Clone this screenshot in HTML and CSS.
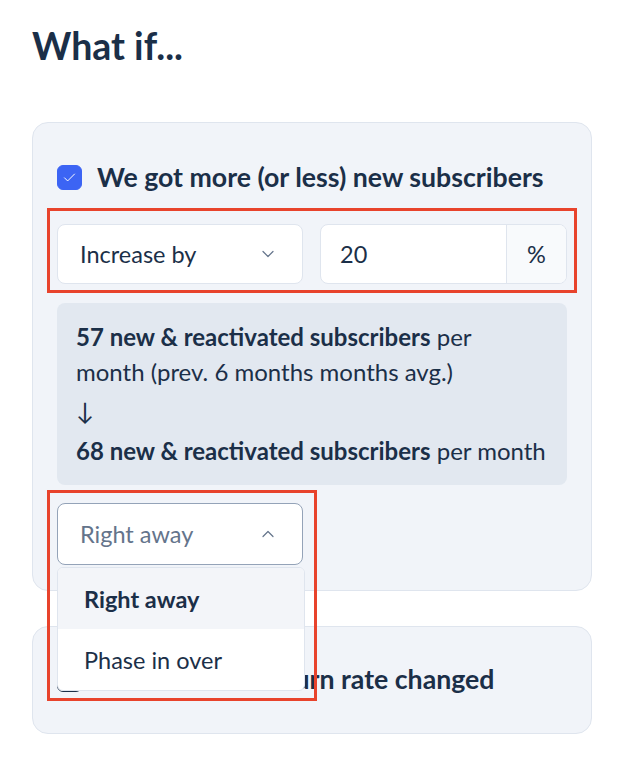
FILE: index.html
```html
<!DOCTYPE html>
<html lang="en">

<head>
    <meta charset="UTF-8">
    <meta name="viewport" content="width=device-width, initial-scale=1.0">
    <title>What if</title>
    <link rel="stylesheet" href="styles.css">
</head>

<body>
    <div class="page">
        <h1>What if...</h1>

        <section class="card">
            <label class="check-row">
                <span class="box checked">
                    <svg viewBox="0 0 24 24" width="15" height="15"><path d="M4 12.5l5 5L20 6.5" fill="none" stroke="#fff" stroke-width="1.6" stroke-linecap="round" stroke-linejoin="round"/></svg>
                </span>
                <span class="check-label">We got more (or less) new subscribers</span>
            </label>

            <div class="controls">
                <div class="select">
                    <span>Increase by</span>
                    <svg class="chev" viewBox="0 0 12 8" width="12" height="8"><path d="M1 1.5l5 5 5-5" fill="none" stroke="#64748b" stroke-width="1.2" stroke-linecap="round" stroke-linejoin="round"/></svg>
                </div>
                <div class="input-group">
                    <span class="value">20</span>
                    <span class="addon">%</span>
                </div>
                <div class="mark mark-controls"></div>
            </div>

            <div class="info">
                <p><b>57 new &amp; reactivated subscribers</b> per month&nbsp;(prev. 6 months months avg.)</p>
                <p class="arrow">&darr;</p>
                <p><b>68 new &amp; reactivated subscribers</b> per month</p>
            </div>

            <div class="timing">
                <div class="select open">
                    <span>Right away</span>
                    <svg class="chev" viewBox="0 0 12 8" width="12" height="8"><path d="M1 6.5l5-5 5 5" fill="none" stroke="#64748b" stroke-width="1.2" stroke-linecap="round" stroke-linejoin="round"/></svg>
                </div>
                <ul class="menu">
                    <li class="active">Right away</li>
                    <li>Phase in over</li>
                </ul>
                <div class="mark mark-timing"></div>
            </div>
        </section>

        <section class="card second">
            <label class="check-row">
                <span class="box"></span>
                <span class="check-label">Our customer churn rate changed</span>
            </label>
        </section>
    </div>
</body>

</html>
```

FILE: styles.css
```css
* {
    margin: 0;
    padding: 0;
    box-sizing: border-box;
}

body {
    font-family: Lato, "Noto Sans", sans-serif;
    color: #1b2f48;
    background: #ffffff;
}

.page {
    padding: 0 32px;
}

h1 {
    font-size: 37.5px;
    font-weight: 700;
    line-height: 44px;
    padding-top: 24px;
    margin-bottom: 54px;
}

.card {
    background: #f1f4f9;
    border: 1px solid #dfe5ee;
    border-radius: 16px;
    padding: 24px 24px 25px;
    margin-bottom: 35px;
}

.card.second {
    padding: 22px 24px 24px;
}

.check-row {
    display: flex;
    align-items: center;
    gap: 15px;
    height: 30px;
    margin: 15px 0;
}

.box {
    flex: none;
    width: 25px;
    height: 25px;
    border-radius: 6px;
    border: 1.5px solid #1b2f48;
    background: #ffffff;
    display: flex;
    align-items: center;
    justify-content: center;
}

.box.checked {
    background: #3c64f4;
    border-color: #3c64f4;
}

.check-label {
    font-size: 26.7px;
    font-weight: 700;
    white-space: nowrap;
}

.controls {
    position: relative;
    display: flex;
    gap: 17px;
    margin-top: 32px;
}

.select {
    width: 246px;
    height: 60px;
    display: flex;
    align-items: center;
    justify-content: space-between;
    padding: 0 28px 0 22px;
    background: #ffffff;
    border: 1px solid #dfe5ee;
    border-radius: 8px;
    font-size: 23.5px;
}

.input-group {
    flex: 1;
    height: 60px;
    display: flex;
    background: #ffffff;
    border: 1px solid #dfe5ee;
    border-radius: 8px;
    font-size: 23.5px;
    overflow: hidden;
}

.value {
    flex: 1;
    display: flex;
    align-items: center;
    padding-left: 19px;
}

.addon {
    width: 60px;
    display: flex;
    align-items: center;
    justify-content: center;
    background: #f8fafc;
    border-left: 1px solid #dfe5ee;
}

.mark {
    position: absolute;
    border: 3px solid #e8432c;
    pointer-events: none;
}

.mark-controls {
    top: -16px;
    bottom: -9px;
    left: -10px;
    right: -10px;
}

.info {
    margin-top: 19px;
    background: #e2e8f0;
    border-radius: 8px;
    padding: 16px 19px 17px;
    font-size: 24px;
    line-height: 35px;
}

.info b {
    font-weight: 700;
}

.info .arrow {
    line-height: 44px;
}

.timing {
    position: relative;
    margin-top: 18px;
    width: 246px;
}

.select.open {
    height: 62px;
    border: 1.5px solid #94a3b8;
    color: #64748b;
}

.menu {
    position: absolute;
    top: 64px;
    left: 0;
    width: 248px;
    list-style: none;
    background: #ffffff;
    border: 1px solid #dfe5ee;
    border-radius: 6px;
    overflow: hidden;
    z-index: 2;
    font-size: 23.5px;
}

.menu li {
    height: 61px;
    display: flex;
    align-items: center;
    padding-left: 26px;
}

.menu li.active {
    background: #f3f5f9;
    font-weight: 700;
}

.mark-timing {
    top: -13px;
    left: -10px;
    width: 270px;
    height: 211px;
    z-index: 3;
}
```
